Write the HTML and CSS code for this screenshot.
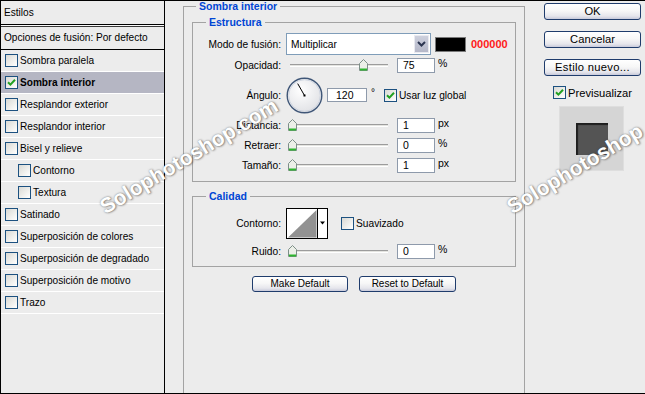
FILE: index.html
```html
<!DOCTYPE html>
<html lang="es">
<head>
<meta charset="utf-8">
<title>Estilo de capa</title>
<link rel="stylesheet" href="styles.css">
</head>
<body>
<div class="dialog">
  <aside class="styles-panel">
    <div class="panel-head">Estilos</div>
    <div class="panel-sep"></div>
    <div class="panel-blend">Opciones de fusión: Por defecto</div>
    <ul class="style-list">
      <li class="style-item"><span class="cb"></span>Sombra paralela</li>
      <li class="style-item is-active"><span class="cb"><svg class="check" width="9" height="9" viewBox="0 0 9 9"><path d="M1 4.2 L3.4 6.6 L8 1.8" fill="none" stroke="#21a121" stroke-width="2"/></svg></span>Sombra interior</li>
      <li class="style-item"><span class="cb"></span>Resplandor exterior</li>
      <li class="style-item"><span class="cb"></span>Resplandor interior</li>
      <li class="style-item"><span class="cb"></span>Bisel y relieve</li>
      <li class="style-item is-sub"><span class="cb"></span>Contorno</li>
      <li class="style-item is-sub"><span class="cb"></span>Textura</li>
      <li class="style-item"><span class="cb"></span>Satinado</li>
      <li class="style-item"><span class="cb"></span>Superposición de colores</li>
      <li class="style-item"><span class="cb"></span>Superposición de degradado</li>
      <li class="style-item"><span class="cb"></span>Superposición de motivo</li>
      <li class="style-item"><span class="cb"></span>Trazo</li>
    </ul>
  </aside>

  <main class="settings">
    <section class="group group-outer">
      <div class="group-title title-outer">Sombra interior</div>

      <section class="group group-inner group-structure">
        <div class="group-title">Estructura</div>

        <div class="row row-mode">
          <span class="label">Modo de fusión:</span>
          <div class="select">
            <span class="select-value">Multiplicar</span>
            <span class="select-btn"><svg width="9" height="6" viewBox="0 0 9 6"><path d="M1 1 L4.5 4.5 L8 1" fill="none" stroke="#2b3550" stroke-width="2"/></svg></span>
          </div>
          <span class="swatch"></span>
          <span class="hex">000000</span>
        </div>

        <div class="row row-slider row-opacity">
          <span class="label">Opacidad:</span>
          <div class="slider"><div class="track"></div><svg class="thumb" style="left:73px" width="9" height="12" viewBox="0 0 9 12"><path d="M0.5 4.5 L4.5 0.5 L8.5 4.5 V11.5 H0.5 Z" fill="#ecefe8" stroke="#7d8f88"/><path d="M1 10.5 H8" stroke="#2fb52f" stroke-width="2"/></svg></div>
          <span class="field">75</span>
          <span class="unit">%</span>
        </div>

        <div class="row row-angle">
          <span class="label">Ángulo:</span>
          <svg class="dial" width="37" height="37" viewBox="0 0 37 37"><defs><radialGradient id="dialFill" cx="40%" cy="35%" r="70%"><stop offset="0" stop-color="#ffffff"/><stop offset="1" stop-color="#dfe0e4"/></radialGradient></defs><circle cx="18.5" cy="18.5" r="17.3" fill="url(#dialFill)" stroke="#3f5677" stroke-width="1.4"/><circle cx="18.5" cy="18.5" r="15.8" fill="none" stroke="#c9d0dd" stroke-width="0.8"/><line x1="18.5" y1="18.5" x2="11.7" y2="6.6" stroke="#000" stroke-width="1"/><rect x="17.5" y="17.5" width="2" height="2" fill="#000"/></svg>
          <span class="field field-angle">120</span>
          <span class="deg">°</span>
          <span class="cb"><svg class="check" width="9" height="9" viewBox="0 0 9 9"><path d="M1 4.2 L3.4 6.6 L8 1.8" fill="none" stroke="#21a121" stroke-width="2"/></svg></span>
          <span class="cb-text">Usar luz global</span>
        </div>

        <div class="row row-slider row-first">
          <span class="label">Distancia:</span>
          <div class="slider"><div class="track"></div><svg class="thumb" style="left:2px" width="9" height="12" viewBox="0 0 9 12"><path d="M0.5 4.5 L4.5 0.5 L8.5 4.5 V11.5 H0.5 Z" fill="#ecefe8" stroke="#7d8f88"/><path d="M1 10.5 H8" stroke="#2fb52f" stroke-width="2"/></svg></div>
          <span class="field">1</span>
          <span class="unit">px</span>
        </div>

        <div class="row row-slider">
          <span class="label">Retraer:</span>
          <div class="slider"><div class="track"></div><svg class="thumb" style="left:2px" width="9" height="12" viewBox="0 0 9 12"><path d="M0.5 4.5 L4.5 0.5 L8.5 4.5 V11.5 H0.5 Z" fill="#ecefe8" stroke="#7d8f88"/><path d="M1 10.5 H8" stroke="#2fb52f" stroke-width="2"/></svg></div>
          <span class="field">0</span>
          <span class="unit">%</span>
        </div>

        <div class="row row-slider">
          <span class="label">Tamaño:</span>
          <div class="slider"><div class="track"></div><svg class="thumb" style="left:2px" width="9" height="12" viewBox="0 0 9 12"><path d="M0.5 4.5 L4.5 0.5 L8.5 4.5 V11.5 H0.5 Z" fill="#ecefe8" stroke="#7d8f88"/><path d="M1 10.5 H8" stroke="#2fb52f" stroke-width="2"/></svg></div>
          <span class="field">1</span>
          <span class="unit">px</span>
        </div>
      </section>

      <section class="group group-inner group-quality">
        <div class="group-title">Calidad</div>

        <div class="row row-contour">
          <span class="label">Contorno:</span>
          <svg class="contour" width="42" height="31" viewBox="0 0 42 31"><rect x="0.5" y="0.5" width="41" height="30" fill="#fff" stroke="#000"/><polygon points="2,29.5 30.5,2 30.5,29.5" fill="#929292"/><line x1="31.5" y1="0" x2="31.5" y2="31" stroke="#000"/><polygon points="34,13.5 39,13.5 36.5,16.5" fill="#000"/></svg>
          <span class="cb cb-smooth"></span>
          <span class="cb-text">Suavizado</span>
        </div>

        <div class="row row-slider row-noise">
          <span class="label">Ruido:</span>
          <div class="slider"><div class="track"></div><svg class="thumb" style="left:2px" width="9" height="12" viewBox="0 0 9 12"><path d="M0.5 4.5 L4.5 0.5 L8.5 4.5 V11.5 H0.5 Z" fill="#ecefe8" stroke="#7d8f88"/><path d="M1 10.5 H8" stroke="#2fb52f" stroke-width="2"/></svg></div>
          <span class="field">0</span>
          <span class="unit">%</span>
        </div>
      </section>

      <div class="defaults">
        <button class="btn btn-small btn-make">Make Default</button>
        <button class="btn btn-small btn-reset">Reset to Default</button>
      </div>
    </section>
  </main>

  <aside class="actions">
    <button class="btn btn-action">OK</button>
    <button class="btn btn-action">Cancelar</button>
    <button class="btn btn-action btn-new">Estilo nuevo...</button>
    <div class="preview-toggle">
      <span class="cb"><svg class="check" width="9" height="9" viewBox="0 0 9 9"><path d="M1 4.2 L3.4 6.6 L8 1.8" fill="none" stroke="#21a121" stroke-width="2"/></svg></span>
      <span class="preview-label">Previsualizar</span>
    </div>
    <div class="preview-box"><div class="preview-square"></div></div>
  </aside>

  <span class="watermark wm-1">Solophotoshop.com</span>
  <span class="watermark wm-2">Solophotoshop</span>
</div>
</body>
</html>
```

FILE: styles.css
```css
* { box-sizing: border-box; }

html, body {
  margin: 0;
  padding: 0;
}

body {
  width: 645px;
  height: 394px;
  overflow: hidden;
  background: #ececec;
  font-family: "Liberation Sans", Arial, sans-serif;
  color: #000;
}

.dialog {
  position: relative;
  display: flex;
  width: 645px;
  height: 394px;
  border-top: 1px solid #000;
  border-bottom: 1px solid #000;
  background: #ececec;
  overflow: hidden;
}

/* ---------- left styles list ---------- */
.styles-panel {
  width: 165px;
  flex: none;
  border-left: 1px solid #000;
  border-right: 1px solid #000;
  display: flex;
  flex-direction: column;
  font-size: 10.1px;
}

.panel-head {
  height: 24px;
  line-height: 23px;
  padding-left: 3px;
  border-bottom: 1px solid #000;
}

.panel-sep {
  height: 2px;
  background: #fafafa;
  border-bottom: 1px solid #3a3a3a;
}

.panel-blend {
  height: 23px;
  line-height: 22px;
  padding-left: 3px;
  border-bottom: 1px solid #000;
}

.style-list {
  list-style: none;
  margin: 0;
  padding: 0;
}

.style-item {
  display: flex;
  align-items: center;
  height: 22px;
  padding-left: 4px;
  border-bottom: 1px solid #fff;
  gap: 2px;
  white-space: nowrap;
}

.style-item.is-sub { padding-left: 17px; }

.style-item.is-active {
  background: #b5b6c3;
  font-weight: bold;
}

/* ---------- checkbox ---------- */
.cb {
  flex: none;
  width: 13px;
  height: 13px;
  border: 1px solid #1c5180;
  background: linear-gradient(135deg, #d9d9d4 0%, #f4f4f2 70%, #ffffff 100%);
  display: inline-flex;
  align-items: center;
  justify-content: center;
}

.check { display: block; }

/* ---------- middle settings ---------- */
.settings {
  width: 360px;
  flex: none;
  padding: 5px 0 0 18px;
  font-size: 10.2px;
}

.group {
  border: 1px solid #a3a3a3;
  display: flex;
  flex-direction: column;
}

.group-outer {
  width: 342px;
  height: 430px;
}

.group-title {
  align-self: flex-start;
  margin: -7px 0 0 13px;
  padding: 0 3px;
  background: #ececec;
  color: #0046d5;
  font-weight: bold;
  font-size: 10.5px;
  line-height: 12px;
}

.title-outer { margin-left: 12px; }

.group-inner { margin: 0 8px; }

.group-structure {
  margin-top: 10px;
  padding-bottom: 7px;
}

.group-quality {
  margin-top: 14px;
  padding-bottom: 6px;
}

.row {
  display: flex;
  align-items: center;
  height: 18px;
  margin-top: 2px;
}

.label {
  width: 88px;
  flex: none;
  text-align: right;
  margin-right: 5px;
  white-space: nowrap;
}

.row-mode { height: 22px; margin-top: 5px; }
.row-opacity { margin-top: 1px; }
.row-angle { height: 36px; margin-top: 3px; }
.row-first { margin-top: 3px; }
.row-contour { height: 31px; margin-top: 6px; }
.row-noise { margin-top: 3px; }

.select {
  width: 145px;
  height: 22px;
  border: 1px solid #7f9db9;
  background: #fff;
  display: flex;
  align-items: center;
  padding: 1px;
}

.select-value {
  flex: 1;
  padding-left: 3px;
}

.select-btn {
  width: 15px;
  height: 18px;
  background: linear-gradient(#cdd0dd, #b4b7c8);
  border: 1px solid #e9eaf0;
  display: flex;
  align-items: center;
  justify-content: center;
}

.select-btn svg { display: block; }

.swatch {
  width: 31px;
  height: 15px;
  margin-left: 4px;
  background: #000;
  border: 1px solid #7a7a7a;
}

.hex {
  margin-left: 5px;
  color: #ff1a1a;
  font-weight: bold;
  font-size: 11px;
}

.slider {
  position: relative;
  width: 106px;
  height: 12px;
  flex: none;
}

.track {
  margin: 5px 4px 0;
  height: 3px;
  background: #e4e4e0;
  border-top: 1px solid #9c9c9c;
  border-bottom: 1px solid #fff;
}

.thumb {
  position: absolute;
  top: 0;
  display: block;
}

.field {
  width: 38px;
  height: 15px;
  margin-left: 5px;
  border: 1px solid #8e9aab;
  background: #fff;
  display: flex;
  align-items: center;
  padding-left: 5px;
  font-size: 10.5px;
  flex: none;
}

.unit { margin-left: 3px; align-self: flex-start; margin-top: 1px; font-size: 10.5px; }

.dial { display: block; flex: none; }

.field-angle {
  width: 40px;
  height: 14px;
  margin-left: 4px;
  padding-left: 8px;
}

.deg {
  width: 13px;
  margin-left: 4px;
  align-self: flex-start;
  margin-top: 10px;
  font-size: 10px;
}

.cb-text {
  margin-left: 2px;
  white-space: nowrap;
}

.contour { display: block; flex: none; }

.cb-smooth { margin-left: 13px; }

.defaults {
  display: flex;
  justify-content: center;
  gap: 11px;
  margin-top: 9px;
}

/* ---------- buttons ---------- */
.btn {
  font-family: "Liberation Sans", Arial, sans-serif;
  color: #000;
  padding: 0;
  border: 1px solid #1f3c6c;
  border-radius: 3px;
  background: linear-gradient(#ffffff 0%, #f7f7f7 45%, #e6e6ec 80%, #c8cada 100%);
  text-align: center;
}

.btn-small {
  height: 16px;
  font-size: 10px;
  line-height: 14px;
}

.btn-make { width: 96px; }
.btn-reset { width: 97px; }

/* ---------- right actions ---------- */
.actions {
  flex: 1;
  padding: 1px 0 0 19px;
  display: flex;
  flex-direction: column;
  align-items: flex-start;
}

.btn-action {
  width: 97px;
  height: 17px;
  margin-top: 1px;
  margin-bottom: 10px;
  font-size: 11.2px;
  line-height: 15px;
}

.btn-new { letter-spacing: 0.3px; }

.preview-toggle {
  display: flex;
  align-items: center;
  margin: 0 0 0 9px;
  height: 13px;
}

.preview-label {
  margin-left: 2px;
  font-size: 11.2px;
}

.preview-box {
  width: 65px;
  height: 65px;
  margin: 7px 0 0 15px;
  background: #d5d5d5;
  border: 1px solid #dedede;
  display: flex;
  align-items: center;
  justify-content: center;
}

.preview-square {
  width: 32px;
  height: 32px;
  background: #545454;
  box-shadow: inset 2px 2px 1px #1e1e1e;
}

/* ---------- watermark overlay ---------- */
.watermark {
  position: absolute;
  font-family: "Liberation Sans", Arial, sans-serif;
  font-weight: bold;
  font-size: 21px;
  line-height: 21px;
  color: #ffffff;
  white-space: nowrap;
  text-shadow: 0 0 2px rgba(60, 60, 60, 0.55), 1px 1px 2px rgba(40, 40, 40, 0.45);
  transform: rotate(-31deg);
  transform-origin: 0 100%;
  pointer-events: none;
}

.wm-1 { left: 107px; top: 195px; }
.wm-2 { left: 514px; top: 195px; }
```
